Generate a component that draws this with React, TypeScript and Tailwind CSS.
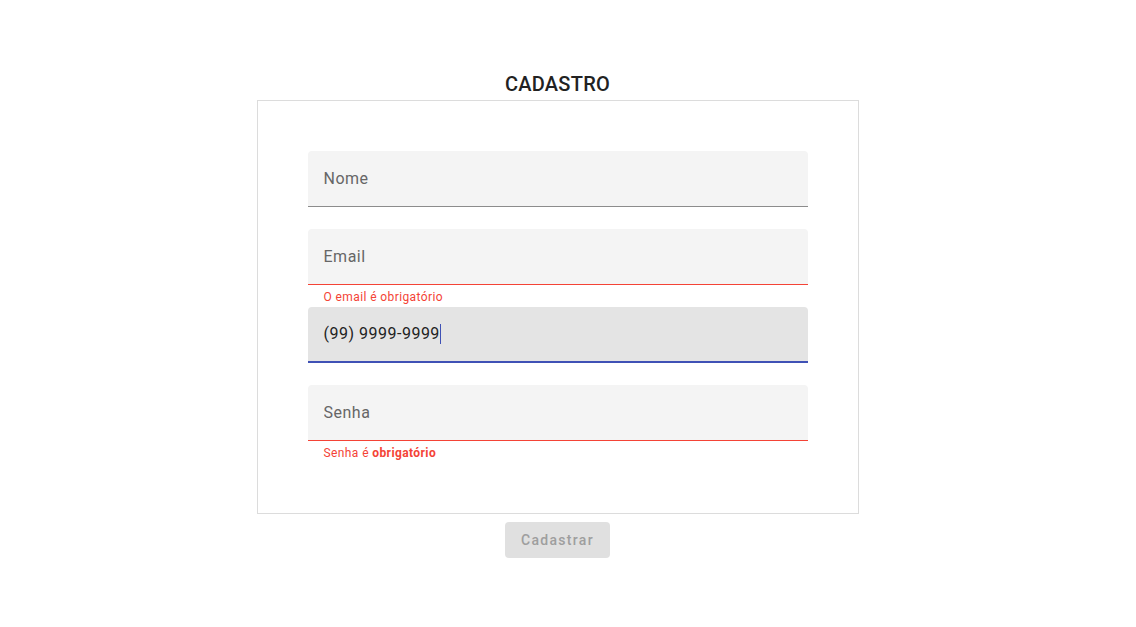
import React from "react"

type FieldProps = {
  placeholder?: string
  value?: string
  error?: React.ReactNode
  focused?: boolean
}

function Field({ placeholder, value, error, focused }: FieldProps) {
  const line = focused
    ? "border-b-2 border-[#3f51b5] bg-[#e4e4e4]"
    : error
    ? "border-b border-[#f44336] bg-[#f4f4f4]"
    : "border-b border-[#8c8c8c] bg-[#f4f4f4]"

  return (
    <div className="h-[78px]">
      <div className={`h-[56px] rounded-t flex items-center pl-[16px] ${line}`}>
        {value !== undefined ? (
          <div className="flex items-center text-base tracking-[0.5px] text-[#222]">
            {value}
            <span className="w-px h-[20px] bg-[#3f51b5]"></span>
          </div>
        ) : (
          <input
            readOnly
            placeholder={placeholder}
            className="w-full bg-transparent outline-none text-base tracking-[0.5px] text-[#222] placeholder:text-[#666]"
          />
        )}
      </div>
      {error && (
        <p className="pl-[16px] mt-[5px] text-xs leading-[14px] tracking-[0.4px] text-[#f44336]">{error}</p>
      )}
    </div>
  )
}

export default function App() {
  return (
    <main className="min-h-screen bg-white pr-[21px] pt-[68px] flex flex-col items-center font-['Roboto',sans-serif]">
      <h2 className="text-xl leading-8 font-medium tracking-[0.25px] text-[#222] uppercase">Cadastro</h2>
      <form className="w-[602px] border border-[#dcdcdc] px-[50px] pt-[50px] pb-[50px]">
        <Field placeholder="Nome" />
        <Field placeholder="Email" error="O email é obrigatório" />
        <Field value="(99) 9999-9999" focused />
        <Field
          placeholder="Senha"
          error={
            <>
              Senha é <b className="font-bold">obrigatório</b>
            </>
          }
        />
      </form>
      <button
        disabled
        className="mt-[8px] h-[36px] w-[105px] rounded bg-[#e0e0e0] text-sm font-medium tracking-[1.3px] text-[#9e9e9e]"
      >
        Cadastrar
      </button>
    </main>
  )
}
